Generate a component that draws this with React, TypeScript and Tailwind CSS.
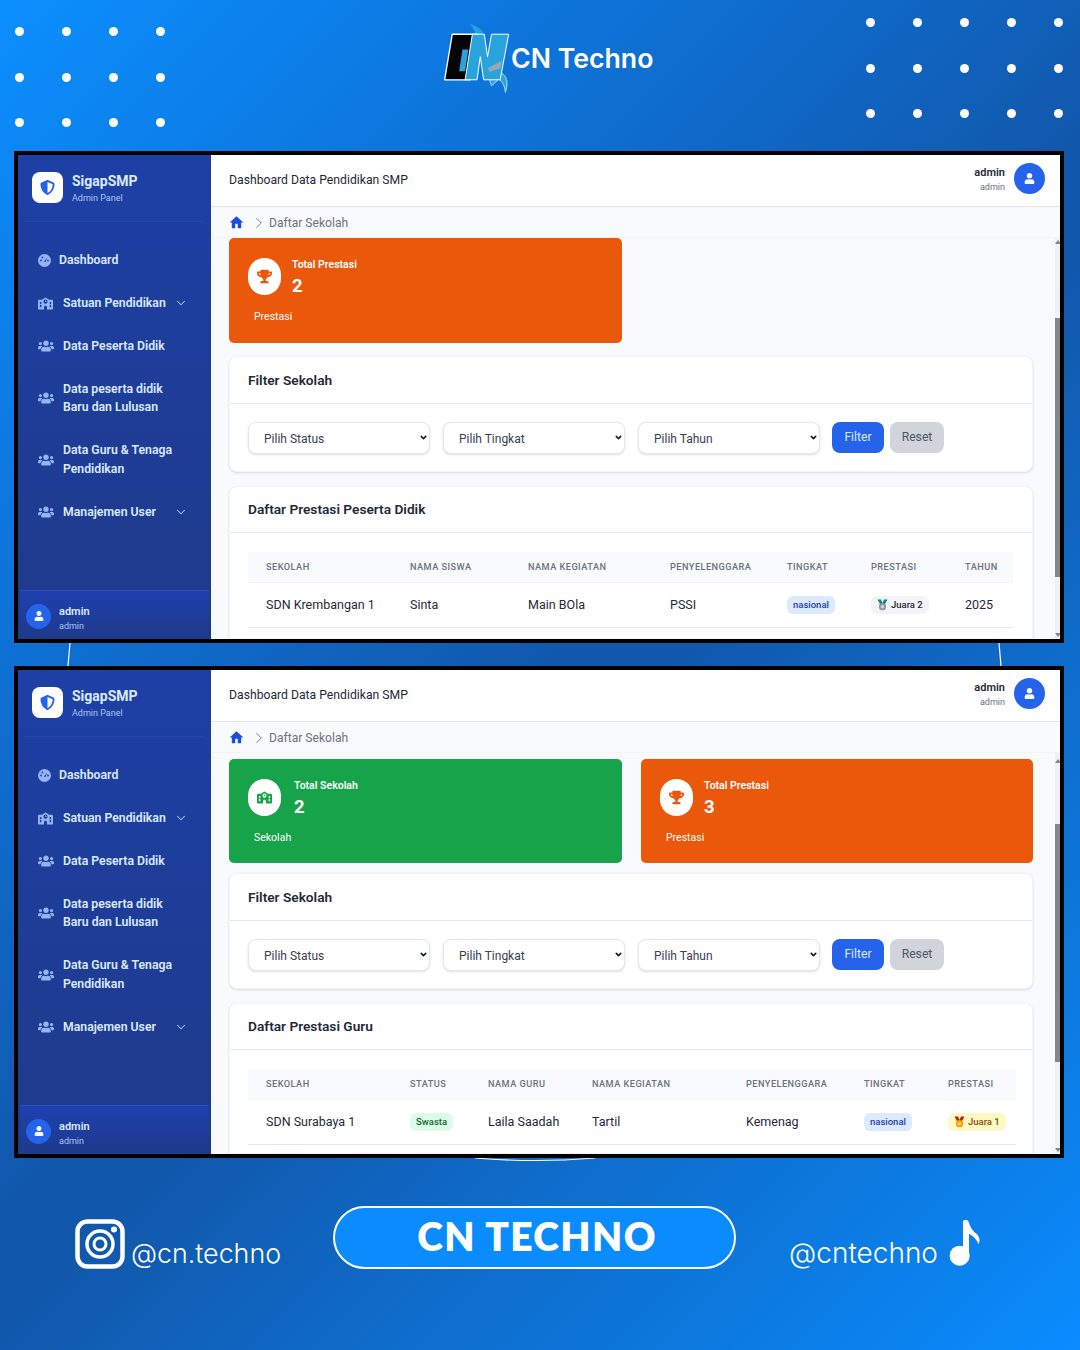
import React from "react";
import { FaTrophy, FaUser, FaUsers } from "react-icons/fa";
import { FaSchool, FaShieldHalved } from "react-icons/fa6";
import { ChevronDown, ChevronRight } from "lucide-react";

function Dots({ cols, className }: { cols: number; className: string }) {
  return (
    <div className={className}>
      {Array.from({ length: cols * 3 }).map((_, i) => (
        <span key={i} className="w-[9px] h-[9px] rounded-full bg-white" />
      ))}
    </div>
  );
}

function Logo() {
  return (
    <svg width="68" height="70" viewBox="130 70 200 212" className="shrink-0">
      <path d="M208 72Q246 84 252 108H226Q226 92 208 72Z" fill="#29a3dc" />
      <path d="M264 232L274 260L296 240Q314 252 316 280Q330 240 306 222Z" fill="#29a3dc" stroke="#ffffff" strokeWidth="2" />
      <path d="M155 104H230L208 242H132Z" fill="#050505" stroke="#ffffff" strokeWidth="4" strokeLinejoin="round" />
      <path d="M186 150L176 216H194L204 150Z" fill="#29a3dc" />
      <path d="M216 104H252L262 172L274 104H326L300 242H250L240 172L230 242H194Z" fill="#29a3dc" stroke="#ffffff" strokeWidth="3" strokeLinejoin="round" />
      <path d="M262 206L306 184L300 208L268 218Z" fill="#9aa7b2" />
    </svg>
  );
}

function Medal({ gold }: { gold?: boolean }) {
  return (
    <svg width="11" height="12" viewBox="0 0 11 12" className="shrink-0">
      <path d="M0.5 0.5H4L5.5 4L7 0.5H10.5L7.5 6H3.5Z" fill={gold ? "#b91c1c" : "#14808f"} />
      <circle cx="5.5" cy="7.7" r="3.6" fill={gold ? "#f59e0b" : "#8b95a1"} />
      <circle cx="5.5" cy="7.7" r="1.8" fill={gold ? "#fcd34d" : "#d1d5db"} />
    </svg>
  );
}

function Gauge() {
  return (
    <svg width="13" height="13" viewBox="0 0 13 13">
      <circle cx="6.5" cy="6.5" r="6.5" fill="#93b4f5" />
      <path d="M6 7.5L9.2 3.4L7.4 8.2Z" fill="#1e40a6" />
      <circle cx="3" cy="6.5" r="0.9" fill="#1e40a6" />
      <circle cx="4.4" cy="3.4" r="0.9" fill="#1e40a6" />
      <circle cx="10" cy="6.5" r="0.9" fill="#1e40a6" />
    </svg>
  );
}

function HomeIcon() {
  return (
    <svg width="15" height="15" viewBox="0 0 24 24" fill="#1d4ed8">
      <path d="M10 21v-7h4v7h5.5v-9H23L12 2 1 12h3.5v9z" />
    </svg>
  );
}

function NavItem({ icon, label, chevron, textClass }: { icon: React.ReactNode; label: React.ReactNode; chevron?: boolean; textClass: string }) {
  return (
    <div className="flex items-center py-[12.25px] pl-[20px] pr-[23px] text-[12.25px] leading-[18.5px] font-semibold text-[#dbeafe]">
      <span className="w-[16px] flex justify-start text-[#93b4f5]">{icon}</span>
      <span className={`${textClass} flex-1`}>{label}</span>
      {chevron && <ChevronDown size={14} strokeWidth={1.8} className="text-[#a9c4f7]" />}
    </div>
  );
}

function Sidebar() {
  const users = <FaUsers size={16} />;
  return (
    <aside className="w-[193px] shrink-0 flex flex-col bg-gradient-to-b from-[#1e40a6] to-[#1e3a8a]">
      <div className="h-[67px] mx-[6px] pl-[8px] flex items-center gap-[9px] border-b border-[#2447a8]">
        <div className="w-[31px] h-[31px] mt-[-1px] rounded-lg bg-white flex items-center justify-center text-[#2563eb]">
          <FaShieldHalved size={15} />
        </div>
        <div className="flex flex-col">
          <span className="text-[14px] leading-[18px] font-bold text-[#dbeafe]">SigapSMP</span>
          <span className="text-[9px] leading-[12px] mt-[2px] text-[#a9c4f7]">Admin Panel</span>
        </div>
      </div>
      <nav className="pt-[16.5px] flex-1">
        <NavItem icon={<Gauge />} label="Dashboard" textClass="ml-[5px]" />
        <NavItem icon={<FaSchool size={15} />} label="Satuan Pendidikan" chevron textClass="ml-[9px]" />
        <NavItem icon={users} label="Data Peserta Didik" textClass="ml-[9px]" />
        <NavItem icon={users} label={<>Data peserta didik<br />Baru dan Lulusan</>} textClass="ml-[9px]" />
        <NavItem icon={users} label={<>Data Guru &amp; Tenaga<br />Pendidikan</>} textClass="ml-[9px]" />
        <NavItem icon={users} label="Manajemen User" chevron textClass="ml-[9px]" />
      </nav>
      <div className="h-[49px] mx-[2px] flex items-center gap-[8px] pl-[6px] pt-[2px] border-t border-[#2a4fc0] bg-gradient-to-b from-[#1e40af] to-[#1e3a8a]">
        <div className="w-[25px] h-[25px] rounded-full bg-[#2563eb] text-white flex items-center justify-center">
          <FaUser size={10} />
        </div>
        <div className="flex flex-col mt-[5px]">
          <span className="text-[11px] leading-[14px] font-semibold text-[#dbeafe]">admin</span>
          <span className="text-[9px] leading-[13px] mt-[1px] text-[#a9c4f7]">admin</span>
        </div>
      </div>
    </aside>
  );
}

function Stat({ color, iconColor, icon, title, value, label, className, gapClass }: { color: string; iconColor: string; icon: React.ReactNode; title: string; value: string; label: string; className: string; gapClass: string }) {
  return (
    <div className={`${color} ${className} rounded-[5px] pt-[20px] pl-[19px] text-white`}>
      <div className={`flex items-start ${gapClass}`}>
        <div className={`w-[33px] h-[37px] rounded-full bg-white flex items-center justify-center ${iconColor}`}>{icon}</div>
        <div className="flex flex-col">
          <span className="text-[10.5px] leading-[14px] font-semibold">{title}</span>
          <span className="text-[18.5px] leading-[24px] mt-[2px] font-bold">{value}</span>
        </div>
      </div>
      <div className="text-[10.5px] leading-[14px] mt-[12px] ml-[6px]">{label}</div>
    </div>
  );
}

function Select({ label }: { label: string }) {
  return (
    <div className="relative">
      <select defaultValue={label} className="block appearance-none w-[182px] h-[32px] rounded-lg border border-gray-200 bg-white pl-[15px] pr-[2px] pt-[1px] text-[12px] text-[#374151] shadow-sm font-['Roboto',sans-serif]">
        <option>{label}</option>
      </select>
      <ChevronDown size={9} strokeWidth={4} className="absolute right-[2px] top-[11px] text-[#111827]" />
    </div>
  );
}

function FilterCard({ className }: { className: string }) {
  return (
    <section className={`${className} w-[804px] rounded-lg border border-gray-100 bg-white shadow-sm`}>
      <div className="h-[47px] px-[18px] flex items-center border-b border-gray-200 text-[13.7px] font-semibold text-[#1f2937]">Filter Sekolah</div>
      <div className="pt-[18px] pl-[18px] pb-[17px] flex items-start gap-[13px]">
        <Select label="Pilih Status" />
        <Select label="Pilih Tingkat" />
        <Select label="Pilih Tahun" />
        <div className="flex gap-[6px] ml-[-1px]">
          <button className="w-[52px] h-[31px] rounded-lg bg-[#2563eb] text-[12.2px] text-[#dbeafe]">Filter</button>
          <button className="w-[54px] h-[31px] rounded-lg bg-[#d1d5db] text-[12.2px] text-[#4b5563]">Reset</button>
        </div>
      </div>
    </section>
  );
}

function TableCard({ title, headers, widths, row, width, className }: { title: string; headers: string[]; widths: number[]; row: React.ReactNode[]; width: string; className: string }) {
  return (
    <section className={`${className} w-[804px] flex-1 rounded-t-lg border border-gray-100 bg-white shadow-sm`}>
      <div className="h-[46px] px-[18px] flex items-center border-b border-gray-200 text-[13.7px] font-semibold text-[#1f2937]">{title}</div>
      <div className="pl-[18px] pt-[19px]">
        <table className={`${width} table-fixed border-collapse`}>
          <colgroup>
            {widths.map((w, i) => <col key={i} style={{ width: w }} />)}
          </colgroup>
          <thead>
            <tr className="h-[30px] bg-[#f9fafb] border-b border-gray-100">
              {headers.map((h) => (
                <th key={h} className="pl-[18px] text-left text-[9.2px] font-medium tracking-[0.05em] uppercase text-[#6b7280]">{h}</th>
              ))}
            </tr>
          </thead>
          <tbody>
            <tr className="h-[45px] border-b border-gray-200">
              {row.map((c, i) => (
                <td key={i} className="pl-[18px] pt-[1px] text-[12.5px] text-[#1f2937] whitespace-nowrap">{c}</td>
              ))}
            </tr>
          </tbody>
        </table>
      </div>
    </section>
  );
}

function Badge({ className, children }: { className: string; children: React.ReactNode }) {
  return <span className={`inline-flex items-center gap-[3px] h-[18px] px-[6px] rounded-md text-[9.5px] font-medium align-middle ${className}`}>{children}</span>;
}

function Screen({ thumbClass, upClass, children }: { thumbClass: string; upClass: string; children: React.ReactNode }) {
  return (
    <div className="relative z-10 h-[492px] border-4 border-black bg-white flex overflow-hidden">
      <Sidebar />
      <main className="flex-1 min-w-0 flex flex-col bg-[#f9fafb] relative">
        <header className="h-[52px] shrink-0 bg-white border-b border-gray-200 flex items-center pl-[18px] pr-[15px]">
          <span className="flex-1 text-[12.2px] mt-[-1px] text-[#1f2937]">Dashboard Data Pendidikan SMP</span>
          <div className="flex flex-col items-end mr-[9px] mt-[-1px]">
            <span className="text-[11px] leading-[14px] font-semibold text-[#1f2937]">admin</span>
            <span className="text-[9px] leading-[14px] text-[#6b7280]">admin</span>
          </div>
          <div className="w-[31px] h-[31px] mt-[-4px] rounded-full bg-[#2563eb] text-white flex items-center justify-center">
            <FaUser size={11} />
          </div>
        </header>
        <div className="h-[31px] shrink-0 border-b border-gray-100 pl-[18px] pt-[1px] flex items-center text-[12.1px] text-[#6b7280]">
          <HomeIcon />
          <ChevronRight size={18} strokeWidth={1.2} className="ml-[6px] mr-[1px] text-[#6b7280]" />
          <span className="mt-[1px]">Daftar Sekolah</span>
        </div>
        <div className="flex-1 min-h-0 pl-[18px] flex flex-col">{children}</div>
        <div className="absolute right-0 top-[83px] bottom-0 w-[5px] bg-[#f1f1f1]">
          <div className={upClass} />
          <div className={`absolute left-0 w-[5px] bg-[#868686] ${thumbClass}`} />
          <div className="absolute bottom-[2px] left-0 w-0 h-0 border-x-[3px] border-x-transparent border-t-[4px] border-t-[#868686]" />
        </div>
      </main>
    </div>
  );
}

export default function App() {
  return (
    <div className="relative w-[1080px] h-[1350px] overflow-hidden font-['Roboto',sans-serif] bg-[linear-gradient(135deg,#0b8fff_0%,#0d78e0_20%,#0f6bcb_33%,#1158ac_50%,#1158ac_55%,#0f6ccb_71%,#0c7ae0_85%,#0a8cff_100%)]">
      <Dots cols={4} className="absolute left-[15px] top-[27px] grid grid-cols-[repeat(4,9px)] gap-x-[38px] gap-y-[36.5px]" />
      <Dots cols={5} className="absolute left-[865.5px] top-[18px] grid grid-cols-[repeat(5,9px)] gap-x-[38px] gap-y-[36.5px]" />
      <svg width="1080" height="1350" viewBox="0 0 1080 1350" className="absolute left-0 top-0">
        <path d="M70 643L68 666M999 643L1001 666" stroke="#ffffff" strokeWidth="1.2" fill="none" />
        <path d="M475 1158Q535 1163 595 1158" stroke="#ffffff" strokeWidth="1.2" fill="none" />
      </svg>

      <header className="relative h-[151px] pt-[23px] pl-[443px] flex items-start">
        <Logo />
        <span className="mt-[15px] text-[26.7px] leading-[40px] font-semibold text-white font-['Inter',sans-serif]">CN Techno</span>
      </header>

      <div className="pl-[14px] pr-[16px] flex flex-col gap-[23px]">
        <Screen thumbClass="top-[80px] h-[259px]" upClass="absolute top-[2px] left-0 w-0 h-0 border-x-[3px] border-x-transparent border-b-[4px] border-b-[#868686]">
          <Stat className="shrink-0 w-[393px] h-[105px]" gapClass="gap-[11px]" color="bg-[#ea580c]" iconColor="text-[#ea580c]" icon={<FaTrophy size={15} />} title="Total Prestasi" value="2" label="Prestasi" />
          <FilterCard className="mt-[13px] shrink-0" />
          <TableCard
            className="mt-[14px]"
            title="Daftar Prestasi Peserta Didik"
            width="w-[765px]"
            widths={[144, 118, 142, 117, 84, 94, 66]}
            headers={["Sekolah", "Nama Siswa", "Nama Kegiatan", "Penyelenggara", "Tingkat", "Prestasi", "Tahun"]}
            row={[
              "SDN Krembangan 1",
              "Sinta",
              "Main BOla",
              "PSSI",
              <Badge className="bg-[#dbeafe] text-[#1e40af]">nasional</Badge>,
              <Badge className="bg-[#f3f4f6] text-[#1f2937]"><Medal />Juara 2</Badge>,
              "2025",
            ]}
          />
        </Screen>

        <Screen thumbClass="top-[71px] h-[238px]" upClass="absolute top-[6px] left-0 w-0 h-0 border-x-[3px] border-x-transparent border-b-[4px] border-b-[#868686]">
          <div className="pt-[6px] flex gap-[19px] shrink-0">
            <Stat className="w-[393px] h-[104px]" gapClass="gap-[13px]" color="bg-[#16a34a]" iconColor="text-[#16a34a]" icon={<FaSchool size={15} />} title="Total Sekolah" value="2" label="Sekolah" />
            <Stat className="w-[392px] h-[104px]" gapClass="gap-[11px]" color="bg-[#ea580c]" iconColor="text-[#ea580c]" icon={<FaTrophy size={15} />} title="Total Prestasi" value="3" label="Prestasi" />
          </div>
          <FilterCard className="mt-[10px] shrink-0" />
          <TableCard
            className="mt-[14px]"
            title="Daftar Prestasi Guru"
            width="w-[768px]"
            widths={[144, 78, 104, 154, 118, 84, 86]}
            headers={["Sekolah", "Status", "Nama Guru", "Nama Kegiatan", "Penyelenggara", "Tingkat", "Prestasi"]}
            row={[
              "SDN Surabaya 1",
              <Badge className="bg-[#dcfce7] text-[#166534]">Swasta</Badge>,
              "Laila Saadah",
              "Tartil",
              "Kemenag",
              <Badge className="bg-[#dbeafe] text-[#1e40af]">nasional</Badge>,
              <Badge className="bg-[#fef9c3] text-[#854d0e]"><Medal gold />Juara 1</Badge>,
            ]}
          />
        </Screen>
      </div>

      <footer className="relative pl-[75px] pt-[48px] flex items-start font-['Inter',sans-serif] text-white">
        <svg width="50" height="50" viewBox="0 0 50 50" className="mt-[13px] shrink-0">
          <rect x="2.5" y="2.5" width="45" height="45" rx="10" fill="none" stroke="#ffffff" strokeWidth="4.5" />
          <circle cx="25" cy="25" r="13" fill="none" stroke="#ffffff" strokeWidth="3.5" />
          <circle cx="25" cy="25" r="6" fill="none" stroke="#ffffff" strokeWidth="3" />
          <circle cx="39" cy="10.5" r="3" fill="#ffffff" />
        </svg>
        <span className="ml-[6px] mt-[28px] text-[26.8px] leading-[38px] font-light">@cn.techno</span>
        <div className="ml-[52px] w-[403px] h-[63px] pb-[3px] pl-[5px] rounded-full border-2 border-white bg-[#0a8cff] flex items-center justify-center text-[39px] font-extrabold tracking-[0.035em] font-['Lato',sans-serif]">CN TECHNO</div>
        <span className="ml-[53px] mt-[28px] text-[28px] leading-[38px] font-light">@cntechno</span>
        <svg width="35" height="50" viewBox="680 85 105 150" className="ml-[9px] mt-[12px] shrink-0">
          <ellipse cx="718" cy="198" rx="30" ry="30" fill="#ffffff" />
          <path d="M728 200V94Q738 86 745 96Q750 118 770 134Q782 146 775 164Q768 144 746 132V200Z" fill="#ffffff" />
        </svg>
      </footer>
    </div>
  );
}
